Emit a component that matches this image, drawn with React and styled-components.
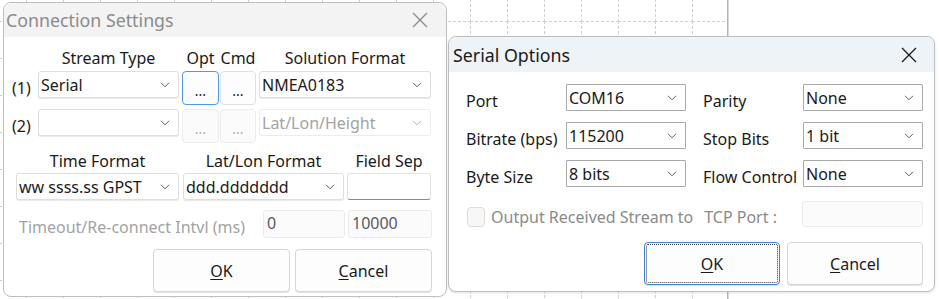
import React from "react"
import styled, { createGlobalStyle } from "styled-components"

const GlobalStyle = createGlobalStyle`
  body {
    margin: 0;
    background: #ffffff;
    font-family: "Noto Sans", "Open Sans", sans-serif;
    color: #1a1a1a;
  }
`

export default function App() {
  return (
    <>
      <GlobalStyle />
      <Desktop>
        <GridPane />
        <ConnectionDialog />
        <SerialDialog />
      </Desktop>
    </>
  )
}

function GridPane() {
  return (
    <GridSvg width="939" height="299">
      <defs>
        <pattern id="cells" x="26" y="21" width="37" height="37" patternUnits="userSpaceOnUse">
          <line x1="0.5" y1="0" x2="0.5" y2="37" stroke="#cfcfcf" strokeDasharray="3 2" />
          <line x1="0" y1="0.5" x2="37" y2="0.5" stroke="#cfcfcf" strokeDasharray="3 2" />
        </pattern>
      </defs>
      <rect x="0" y="0" width="727" height="299" fill="url(#cells)" />
      <rect x="727" y="0" width="1" height="299" fill="#b4b4b4" />
      <rect x="728" y="0" width="1" height="299" fill="#dcdcdc" />
    </GridSvg>
  )
}

function Chevron() {
  return (
    <svg width="10" height="6" viewBox="0 0 10 6">
      <path d="M1 0.8 L5 4.8 L9 0.8" fill="none" stroke="#5c5c5c" strokeWidth="1" />
    </svg>
  )
}

function CloseIcon({ color }) {
  return (
    <svg width="16" height="16" viewBox="0 0 16 16">
      <path d="M1 1 L15 15 M15 1 L1 15" stroke={color} strokeWidth="1.3" />
    </svg>
  )
}

function Combo({ value, width, disabled, square }) {
  return (
    <ComboBox $w={width} $disabled={disabled} $square={square}>
      <span>{value}</span>
      <Chevron />
    </ComboBox>
  )
}

function ConnectionDialog() {
  return (
    <Window $x={3} $y={2} $w={444} $h={295}>
      <TitleBar $h={34} $bg="#f3f3f3" $pl={2} $pr={18}>
        <TitleText $color="#8b8b8b">Connection Settings</TitleText>
        <CloseIcon color="#8b8b8b" />
      </TitleBar>
      <LeftBody>
        <Row>
          <Header $w={26} />
          <Header $w={141}>Stream Type</Header>
          <Header $w={37} $ml={3}>Opt</Header>
          <Header $w={36} $ml={1}>Cmd</Header>
          <Header $w={172} $ml={3}>Solution Format</Header>
        </Row>
        <Row $mt={3}>
          <Index>(1)</Index>
          <Combo value="Serial" width={141} />
          <DotsButton $ml={3} $w={37} $focused>...</DotsButton>
          <DotsButton $ml={1} $w={36}>...</DotsButton>
          <Spacer $w={3} />
          <Combo value="NMEA0183" width={172} />
        </Row>
        <Row $mt={4}>
          <Index>(2)</Index>
          <Combo value="" width={141} />
          <DotsButton $ml={3} $w={37} $disabled>...</DotsButton>
          <DotsButton $ml={1} $w={36} $disabled>...</DotsButton>
          <Spacer $w={3} />
          <Combo value="Lat/Lon/Height" width={172} disabled />
        </Row>
        <Row $mt={8} $ml={4}>
          <Header $w={163}>Time Format</Header>
          <Header $w={161} $ml={4}>Lat/Lon Format</Header>
          <Header $w={84} $ml={3}>Field Sep</Header>
        </Row>
        <Row $mt={2} $ml={4}>
          <Combo value="ww ssss.ss GPST" width={163} />
          <Spacer $w={4} />
          <Combo value="ddd.ddddddd" width={161} />
          <Spacer $w={3} />
          <EditBox $w={84} $h={27} />
        </Row>
        <Row $mt={10}>
          <MutedLabel>Timeout/Re-connect Intvl (ms)</MutedLabel>
          <EditBox $w={82} $h={28} $disabled>0</EditBox>
          <Spacer $w={3} />
          <EditBox $w={84} $h={28} $disabled>10000</EditBox>
        </Row>
        <ButtonRow $mt={11} $gap={5}>
          <DialogButton $w={137}><u>O</u>K</DialogButton>
          <DialogButton $w={137}><u>C</u>ancel</DialogButton>
        </ButtonRow>
      </LeftBody>
    </Window>
  )
}

function SerialDialog() {
  const rows = [
    ["Port", "COM16", "Parity", "None"],
    ["Bitrate (bps)", "115200", "Stop Bits", "1 bit"],
    ["Byte Size", "8 bits", "Flow Control", "None"],
  ]
  return (
    <Window $x={448} $y={36} $w={487} $h={256} $shadow>
      <TitleBar $h={35} $bg="#eef3f8" $pl={4} $pr={17}>
        <TitleText $color="#1a1a1a">Serial Options</TitleText>
        <CloseIcon color="#1a1a1a" />
      </TitleBar>
      <RightBody>
        <OptionGrid>
          {rows.map(([l1, v1, l2, v2]) => (
            <React.Fragment key={l1}>
              <FieldLabel>{l1}</FieldLabel>
              <Combo value={v1} width={120} square />
              <FieldLabel $ml={17}>{l2}</FieldLabel>
              <Combo value={v2} width={120} square />
            </React.Fragment>
          ))}
        </OptionGrid>
        <CheckRow>
          <CheckBox />
          <MutedText>Output Received Stream to</MutedText>
          <MutedText $ml={11}>TCP Port :</MutedText>
          <PortEdit>
            <EditBox $w={121} $h={26} $disabled />
          </PortEdit>
        </CheckRow>
        <ButtonRow $mt={15} $gap={7}>
          <DialogButton $w={136} $default><u>O</u>K</DialogButton>
          <DialogButton $w={136}><u>C</u>ancel</DialogButton>
        </ButtonRow>
      </RightBody>
    </Window>
  )
}

const Desktop = styled.div`
  position: relative;
  width: 939px;
  height: 299px;
  overflow: hidden;
  background: #ffffff;
`

const GridSvg = styled.svg`
  position: absolute;
  left: 0;
  top: 0;
`

const Window = styled.div`
  position: absolute;
  left: ${(p) => p.$x}px;
  top: ${(p) => p.$y}px;
  width: ${(p) => p.$w}px;
  height: ${(p) => p.$h}px;
  box-sizing: border-box;
  border: 1px solid #bdbdbd;
  border-radius: 8px;
  background: #ffffff;
  overflow: hidden;
  display: flex;
  flex-direction: column;
  box-shadow: ${(p) => (p.$shadow ? "0 1px 3px rgba(0,0,0,0.12)" : "none")};
`

const TitleBar = styled.div`
  height: ${(p) => p.$h}px;
  flex: none;
  background: ${(p) => p.$bg};
  display: flex;
  align-items: center;
  justify-content: space-between;
  padding: 0 ${(p) => p.$pr}px 0 ${(p) => p.$pl}px;
`

const TitleText = styled.span`
  font-size: 17.8px;
  color: ${(p) => p.$color};
`

const LeftBody = styled.div`
  display: flex;
  flex-direction: column;
  padding: 11px 14px 0 8px;
`

const RightBody = styled.div`
  display: flex;
  flex-direction: column;
  padding: 12px 11px 0 17px;
`

const Row = styled.div`
  display: flex;
  align-items: flex-start;
  margin-top: ${(p) => p.$mt || 0}px;
  margin-left: ${(p) => p.$ml || 0}px;
`

const Header = styled.div`
  width: ${(p) => p.$w}px;
  margin-left: ${(p) => p.$ml || 0}px;
  flex: none;
  text-align: center;
  font-size: 16px;
  line-height: 20px;
  height: 20px;
  white-space: nowrap;
`

const Index = styled.div`
  width: 26px;
  flex: none;
  font-size: 16px;
  line-height: 20px;
  padding-top: 7px;
  white-space: nowrap;
`

const Spacer = styled.div`
  width: ${(p) => p.$w}px;
  flex: none;
`

const ComboBox = styled.div`
  width: ${(p) => p.$w}px;
  height: 27px;
  flex: none;
  box-sizing: border-box;
  display: flex;
  align-items: center;
  justify-content: space-between;
  padding: 0 8px 0 2px;
  font-size: 16px;
  white-space: nowrap;
  color: ${(p) => (p.$disabled ? "#a3a3a3" : "#1a1a1a")};
  background: #ffffff;
  border: 1px solid ${(p) => (p.$square ? "#a9a9a9" : p.$disabled ? "#ececec" : "#dedede")};
  border-radius: ${(p) => (p.$square ? "1px" : "3px")};
  box-shadow: ${(p) => (p.$square || p.$disabled ? "none" : "0 1px 0 #e8e8e8")};
  svg {
    opacity: ${(p) => (p.$disabled ? 0.45 : 1)};
  }
`

const DotsButton = styled.div`
  width: ${(p) => p.$w}px;
  height: 34px;
  margin-left: ${(p) => p.$ml || 0}px;
  flex: none;
  box-sizing: border-box;
  display: flex;
  align-items: center;
  justify-content: center;
  padding-top: 4px;
  font-size: 14px;
  color: ${(p) => (p.$disabled ? "#b0b0b0" : "#1a1a1a")};
  background: ${(p) => (p.$disabled ? "#fbfbfb" : "#fdfdfd")};
  border: 1px solid ${(p) => (p.$focused ? "#4b9be6" : p.$disabled ? "#ececec" : "#e0e0e0")};
  border-radius: 4px;
`

const EditBox = styled.div`
  width: ${(p) => p.$w}px;
  height: ${(p) => p.$h}px;
  margin-left: ${(p) => p.$ml || 0}px;
  flex: none;
  box-sizing: border-box;
  padding: 3px 0 0 3px;
  font-size: 16px;
  line-height: 18px;
  color: #5a5a5a;
  background: ${(p) => (p.$disabled ? "#fbfbfb" : "#ffffff")};
  border: 1px solid ${(p) => (p.$disabled ? "#ebebeb" : "#e3e3e3")};
  border-bottom-color: ${(p) => (p.$disabled ? "#ebebeb" : "#8a8a8a")};
  border-radius: 3px;
`

const MutedLabel = styled.div`
  flex: 1;
  padding: 7px 0 0 7px;
  font-size: 16px;
  line-height: 20px;
  color: #a3a3a3;
  white-space: nowrap;
`

const ButtonRow = styled.div`
  display: flex;
  justify-content: flex-end;
  gap: ${(p) => p.$gap}px;
  margin-top: ${(p) => p.$mt}px;
`

const DialogButton = styled.div`
  width: ${(p) => p.$w}px;
  height: 43px;
  box-sizing: border-box;
  display: flex;
  align-items: center;
  justify-content: center;
  font-size: 16px;
  color: #1a1a1a;
  background: #fdfdfd;
  border: 1px solid ${(p) => (p.$default ? "#3d86d6" : "#d6d6d6")};
  border-radius: 4px;
  outline: ${(p) => (p.$default ? "1px dotted #3a3a3a" : "none")};
  outline-offset: -3px;
  box-shadow: 0 1px 0 #e4e4e4;
  u {
    text-underline-offset: 2px;
  }
`

const OptionGrid = styled.div`
  display: grid;
  grid-template-columns: 100px 120px 117px 120px;
  grid-auto-rows: 27px;
  row-gap: 11px;
`

const FieldLabel = styled.div`
  padding: 7px 0 0 ${(p) => p.$ml || 0}px;
  font-size: 16px;
  line-height: 20px;
  white-space: nowrap;
`

const CheckRow = styled.div`
  display: flex;
  align-items: center;
  margin-top: 14px;
  height: 26px;
`

const CheckBox = styled.div`
  width: 18px;
  height: 20px;
  margin: 6px 6px 0 1px;
  flex: none;
  box-sizing: border-box;
  border: 1px solid #dcdcdc;
  border-radius: 4px;
  background: #f7f7f7;
`

const MutedText = styled.span`
  margin-left: ${(p) => p.$ml || 0}px;
  padding-top: 6px;
  font-size: 16px;
  color: #8a8a8a;
  white-space: nowrap;
`

const PortEdit = styled.div`
  margin-left: auto;
`
